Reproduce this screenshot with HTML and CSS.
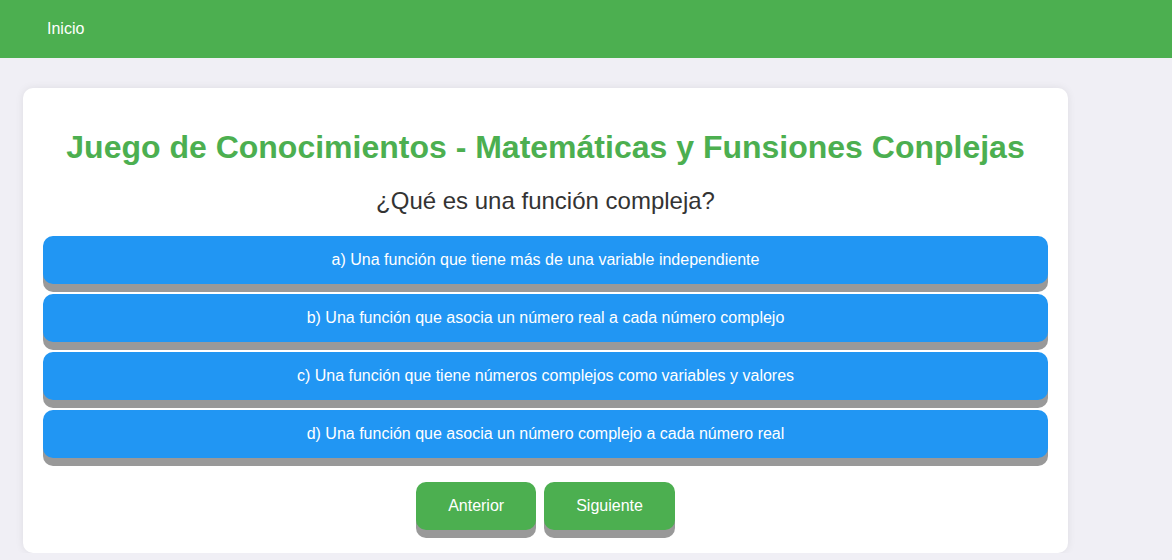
FILE: index.html
```html
<!DOCTYPE html>
<html lang="es">
<head>
<meta charset="utf-8">
<title>Juego de Conocimientos</title>
<link rel="stylesheet" href="styles.css">
</head>
<body>
<nav class="topbar">
  <a class="nav-link" href="#">Inicio</a>
</nav>
<main class="card">
  <h1 class="title">Juego de Conocimientos - Matemáticas y Funsiones Conplejas</h1>
  <h2 class="question">¿Qué es una función compleja?</h2>
  <div class="options">
    <button class="option">a) Una función que tiene más de una variable independiente</button>
    <button class="option">b) Una función que asocia un número real a cada número complejo</button>
    <button class="option">c) Una función que tiene números complejos como variables y valores</button>
    <button class="option">d) Una función que asocia un número complejo a cada número real</button>
  </div>
  <div class="nav-buttons">
    <button class="nav-btn">Anterior</button>
    <button class="nav-btn">Siguiente</button>
  </div>
</main>
</body>
</html>
```
FILE: styles.css
```css
html, body {
  margin: 0;
  padding: 0;
}
body {
  background: #f0eff5;
  font-family: "Liberation Sans", Arial, sans-serif;
  color: #333;
}
.topbar {
  height: 58px;
  background: #4caf50;
  display: flex;
  align-items: center;
  padding: 0 47px;
}
.nav-link {
  color: #fff;
  text-decoration: none;
  font-size: 16px;
}
.card {
  display: block;
  width: 1045px;
  box-sizing: border-box;
  margin: 30px 0 0 23px;
  padding: 20px 20px 23px;
  background: #fff;
  border-radius: 10px;
  box-shadow: 0 0 8px rgba(0, 0, 0, 0.08);
  text-align: center;
}
.title {
  color: #4caf50;
  font-size: 32px;
  font-weight: bold;
  margin: 21px 0;
}
.question {
  font-size: 24px;
  font-weight: normal;
  margin: 20px 0 21px;
  color: #333;
}
.options {
  display: flex;
  flex-direction: column;
  gap: 10px;
}
.option {
  height: 48px;
  border: none;
  border-radius: 10px;
  background: #2196f3;
  color: #fff;
  font-family: "Liberation Sans", Arial, sans-serif;
  font-size: 16px;
  box-shadow: 0 8px 0 #999;
  cursor: pointer;
}
.nav-buttons {
  display: flex;
  justify-content: center;
  gap: 8px;
  margin-top: 24px;
}
.nav-btn {
  height: 48px;
  padding: 0 32px;
  border: none;
  border-radius: 10px;
  background: #4caf50;
  color: #fff;
  font-family: "Liberation Sans", Arial, sans-serif;
  font-size: 16px;
  box-shadow: 0 8px 0 #999;
  cursor: pointer;
}
```
